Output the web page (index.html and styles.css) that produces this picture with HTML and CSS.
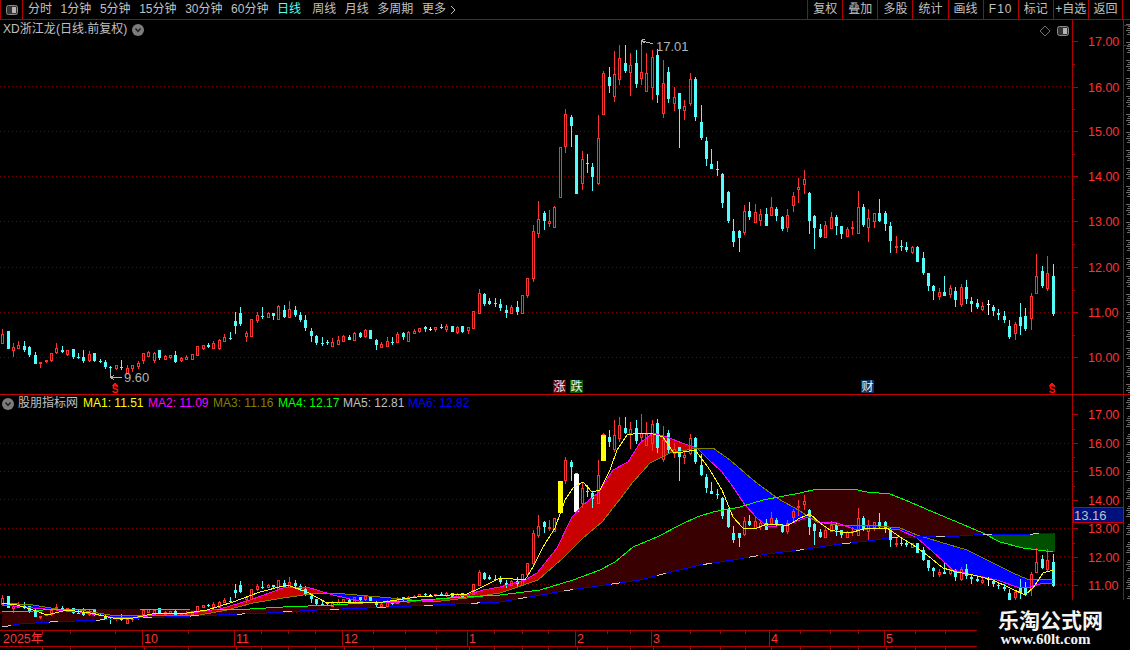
FILE: index.html
```html
<!DOCTYPE html>
<html lang="zh-CN">
<head>
  <meta charset="UTF-8" />
  <title>XD浙江龙 日线</title>
  <link rel="stylesheet" href="styles.css">
</head>
<body>
  <div class="toolbar">
    <div class="layoutBtn">
      <svg class="panelIcon" viewBox="0 0 12 10"><rect x="0.5" y="0.5" width="11" height="9" rx="2" class="panelIconFrame"/><rect x="6" y="2" width="4" height="6" class="panelIconFill"/></svg>
    </div>
    <div class="periods">
      <span>分时</span>
      <span>1分钟</span>
      <span>5分钟</span>
      <span>15分钟</span>
      <span>30分钟</span>
      <span>60分钟</span>
      <span class="active">日线</span>
      <span>周线</span>
      <span>月线</span>
      <span>多周期</span>
      <span class="more">更多<svg class="moreArrow" viewBox="0 0 6 10"><path d="M1 1 L5 5 L1 9"/></svg></span>
    </div>
    <div class="actions">
      <span>复权</span>
      <span>叠加</span>
      <span>多股</span>
      <span>统计</span>
      <span>画线</span>
      <span class="wide">F10</span>
      <span>标记</span>
      <span>+自选</span>
      <span class="last">返回</span>
    </div>
  </div>

  <section class="panel pricePanel">
    <svg id="priceChart" class="chart" viewBox="0 20 1130 374"></svg>
    <div class="panelTitle">
      <span class="titleText">XD浙江龙 (日线.前复权)</span>
      <svg class="roundBtn" viewBox="0 0 12 12"><circle cx="6" cy="6" r="6" class="roundBtnBg"/><path d="M3.5 4.5 L6 7.5 L8.5 4.5" class="roundBtnArrow"/></svg>
    </div>
    <div class="panelTools">
      <svg class="diamond" viewBox="0 0 12 12"><path d="M6 1 L11 6 L6 11 L1 6 Z"/></svg>
      <svg class="panelIcon" viewBox="0 0 12 10"><rect x="0.5" y="0.5" width="11" height="9" rx="2" class="panelIconFrame"/><rect x="6" y="2" width="4" height="6" class="panelIconFill"/></svg>
    </div>
  </section>

  <section class="panel indicatorPanel">
    <svg id="indicatorChart" class="chart" viewBox="0 395 1130 235"></svg>
    <div class="legend">
      <svg class="roundBtn" viewBox="0 0 12 12"><circle cx="6" cy="6" r="6" class="roundBtnBg"/><path d="M3.5 4.5 L6 7.5 L8.5 4.5" class="roundBtnArrow"/></svg>
      <span class="legendName">股朋指标网</span>
      <span class="legendItem ma1">MA1: 11.51</span>
      <span class="legendItem ma2">MA2: 11.09</span>
      <span class="legendItem ma3">MA3: 11.16</span>
      <span class="legendItem ma4">MA4: 12.17</span>
      <span class="legendItem ma5">MA5: 12.81</span>
      <span class="legendItem ma6">MA6: 12.82</span>
    </div>
  </section>

  <svg id="timeAxis" class="timeAxis" viewBox="0 630 1130 20"></svg>

  <div class="watermark">
    <div class="wmName">乐淘公式网</div>
    <div class="wmUrl">www.60lt.com</div>
  </div>

  <script src="chart.js"></script>
</body>
</html>
```

FILE: styles.css
```css
html, body {
  margin: 0;
  padding: 0;
  height: 100%;
  overflow: hidden;
  background: black;
  font-family: "Liberation Sans", "Noto Sans CJK SC", sans-serif;
  font-size: 12px;
  color: #c0c0c0;
}

.toolbar {
  display: flex;
  height: 20px;
  box-sizing: border-box;
  border-bottom: 1px solid #b00000;
  padding-right: 7px;
  line-height: 19px;
}

.layoutBtn {
  width: 23px;
  box-sizing: border-box;
  border-left: 1px solid #b00000;
  border-right: 1px solid #b00000;
  display: flex;
  align-items: center;
  justify-content: center;
}

.panelIcon {
  width: 12px;
  height: 10px;
}

.panelIconFrame {
  fill: #333;
  stroke: #8c8c8c;
}

.panelIconFill {
  fill: #b4b4b4;
}

.periods {
  display: flex;
  gap: 8.6px;
  margin-left: 5px;
}

.periods .active {
  color: #54fcfc;
  margin-right: 2.5px;
}

.more {
  display: flex;
  align-items: center;
  gap: 4px;
}

.moreArrow {
  width: 6px;
  height: 10px;
  fill: none;
  stroke: #c0c0c0;
}

.actions {
  display: flex;
  margin-left: auto;
}

.actions span {
  width: 35.1px;
  box-sizing: border-box;
  border-left: 1px solid #b00000;
  text-align: center;
}

.actions .wide {
  letter-spacing: 1px;
}

.actions .last {
  border-right: 1px solid #b00000;
}

.panel {
  position: relative;
}

.pricePanel {
  height: 375px;
  box-sizing: border-box;
  border-bottom: 1px solid #c80000;
}

.indicatorPanel {
  height: 235px;
}

.chart {
  display: block;
  width: 1130px;
}

.pricePanel .chart {
  height: 374px;
}

.indicatorPanel .chart {
  height: 235px;
}

.panelTitle {
  position: absolute;
  top: 2px;
  left: 3px;
  display: flex;
  align-items: center;
  gap: 5px;
  line-height: 15px;
}

.titleText {
  word-spacing: -3px;
}

.roundBtn {
  width: 12px;
  height: 12px;
}

.roundBtnBg {
  fill: #7c7c7c;
}

.roundBtnArrow {
  fill: none;
  stroke: #1c1c1c;
  stroke-width: 1.4;
}

.panelTools {
  position: absolute;
  top: 5px;
  left: 1039px;
  display: flex;
  align-items: center;
  gap: 6px;
}

.diamond {
  width: 12px;
  height: 12px;
  fill: none;
  stroke: #6c6c6c;
}

.legend {
  position: absolute;
  top: 1px;
  left: 2px;
  display: flex;
  align-items: center;
  line-height: 15px;
}

.legendName {
  width: 65px;
  margin-left: 4px;
}

.legendItem {
  width: 65px;
  white-space: nowrap;
}

.ma1 { color: #ffff00; }
.ma2 { color: #ff00ff; }
.ma3 { color: #808000; }
.ma4 { color: #00ff00; }
.ma5 { color: #c0c0c0; }
.ma6 { color: #0000ff; }

.timeAxis {
  display: block;
  width: 1130px;
  height: 20px;
}

.watermark {
  position: absolute;
  left: 977px;
  top: 600px;
  width: 153px;
  height: 50px;
  background: black;
  color: #f4f4f4;
  font-weight: bold;
  text-align: center;
}

.wmName {
  font-size: 21px;
  line-height: 24px;
  margin-top: 7px;
  padding-right: 6px;
  font-family: "Noto Sans CJK SC", sans-serif;
}

.wmUrl {
  font-size: 15px;
  line-height: 17px;
  padding-right: 16px;
  font-family: "Liberation Serif", serif;
}

/* chart pieces */
.chart line, .chart path, .chart rect, .chart polyline, .timeAxis line {
  shape-rendering: crispEdges;
}

.grid {
  stroke: #7c0000;
  stroke-dasharray: 1 3;
}

.axisLine {
  stroke: #b00000;
}

.axisText {
  fill: #ff3232;
  font-size: 12.5px;
}

.wickUp { stroke: #ff3232; }
.wickDown { stroke: #54fcfc; }
.wickFlat { stroke: #ffffff; }
.bodyUp { stroke: #ff3232; fill: black; }
.bodyUpOpen { stroke: #ff3232; fill: none; }
.bodyDown { fill: #54fcfc; }
.bodyFlat { fill: #ffffff; }

.line { fill: none; }
.lineMa1 { stroke: #ffff00; }
.lineMa2 { stroke: #ff00ff; }
.lineMa3 { stroke: #808000; }
.lineMa4 { stroke: #00ff00; }
.lineMa5 { stroke: #c8c8c8; stroke-dasharray: 9 38; }
.lineMa6 { stroke: #0000ff; }

.bandRed { stroke: #c80000; fill: none; }
.bandBlue { stroke: #0000ff; fill: none; }
.bandMaroon { stroke: #380000; fill: none; }
.bandGreen { stroke: #005000; fill: none; }

.barYellow { fill: #ffff00; }
.barWhite { fill: #ffffff; }

.note { fill: #b4b4b4; font-size: 13px; }
.noteLine { stroke: #b4b4b4; fill: none; }
.signal { fill: #ff1010; font-size: 10px; font-weight: bold; text-anchor: middle; }
.signalHead { fill: #ff1010; }
.tag { fill: #f0f0f0; font-size: 12px; text-anchor: middle; }
.tagRise { fill: #6c0000; }
.tagFall { fill: #006000; }
.tagCash { fill: #0c3464; }
.priceBox { fill: #00107c; stroke: #c80000; }
.priceBoxText { fill: #c0c0c0; font-size: 13px; }
.sideTick { stroke: #6c6c6c; }
```

FILE: chart.js
```js
// x, body top, body bottom, high, low, kind - all in main chart pixels
const candles = [
  [2,334,343,329,344,'r'],[8,331,349,331,349,'c'],[13,347,350,343,357,'r'],[18,345,348,341,348,'r'],
  [24,346,350,341,352,'c'],[29,347,355,346,357,'c'],[35,355,364,352,364,'c'],[40,362,363,362,368,'r'],
  [46,360,361,360,363,'r'],[51,353,360,353,362,'r'],[56,348,352,343,354,'r'],[62,350,352,346,353,'c'],
  [67,350,354,350,356,'r'],[73,349,357,349,359,'c'],[78,357,357,353,359,'c'],[83,357,361,350,363,'c'],
  [89,354,360,351,362,'r'],[94,353,361,353,362,'c'],[100,361,362,359,363,'c'],[105,362,367,360,369,'c'],
  [110,367,368,366,375,'c'],[116,365,368,365,370,'r'],[121,367,368,360,370,'c'],[127,368,373,365,374,'r'],
  [132,365,368,365,372,'r'],[138,363,366,361,369,'r'],[143,353,360,353,364,'r'],[148,352,356,351,357,'r'],
  [154,353,360,352,363,'r'],[159,350,358,350,360,'c'],[165,356,359,355,360,'r'],[170,355,357,355,359,'r'],
  [175,355,362,351,363,'c'],[181,358,360,357,362,'r'],[186,357,359,355,360,'r'],[192,354,359,354,359,'r'],
  [197,346,355,346,355,'r'],[203,345,348,345,350,'r'],[208,345,347,343,348,'c'],[213,343,348,341,349,'r'],
  [219,340,348,339,350,'r'],[224,337,341,334,341,'r'],[230,338,338,332,340,'c'],[235,321,326,312,334,'c'],
  [240,313,324,307,326,'c'],[246,333,336,331,342,'r'],[251,319,336,319,336,'r'],[257,315,320,312,323,'r'],
  [262,316,317,307,319,'c'],[268,313,317,312,317,'r'],[273,313,316,313,320,'c'],[278,306,319,305,320,'r'],
  [284,310,317,305,318,'c'],[289,309,317,301,317,'r'],[295,310,315,306,317,'c'],[300,315,320,312,322,'c'],
  [305,320,328,315,331,'c'],[311,331,336,328,342,'c'],[316,336,343,335,345,'c'],[322,343,343,337,346,'c'],
  [327,342,343,340,345,'c'],[332,342,346,338,346,'r'],[338,340,344,336,344,'r'],[343,336,341,335,341,'r'],
  [349,337,340,335,340,'c'],[354,333,340,332,340,'r'],[360,333,337,332,338,'c'],[365,330,336,329,338,'r'],
  [370,330,339,330,339,'c'],[376,340,345,339,350,'c'],[381,344,347,342,347,'r'],[387,341,346,337,346,'r'],
  [392,342,343,337,345,'c'],[397,334,342,332,343,'r'],[403,333,337,332,340,'c'],[408,332,341,331,341,'r'],
  [414,331,333,329,334,'r'],[419,328,331,328,333,'r'],[425,327,329,326,332,'c'],[430,329,329,327,331,'w'],
  [435,327,329,327,332,'r'],[441,327,328,324,329,'c'],[446,326,329,324,332,'r'],[452,326,332,326,332,'c'],
  [457,327,332,326,334,'r'],[462,326,332,326,333,'c'],[468,327,330,327,334,'r'],[473,311,328,311,328,'r'],
  [479,293,313,289,313,'r'],[484,294,304,293,306,'c'],[489,301,304,298,305,'c'],[495,303,304,298,307,'c'],
  [500,304,308,299,311,'c'],[506,310,313,305,318,'c'],[511,307,313,305,313,'r'],[517,307,312,301,315,'c'],
  [522,295,313,295,314,'r'],[527,278,295,278,298,'r'],[533,231,278,225,282,'r'],[538,219,233,201,238,'r'],
  [544,213,221,211,230,'c'],[549,221,223,210,227,'r'],[554,207,227,206,228,'r'],[560,147,197,147,197,'r'],
  [565,114,146,109,153,'r'],[571,117,126,115,147,'c'],[576,135,194,135,194,'c'],[582,159,183,151,190,'r'],
  [587,163,164,154,173,'c'],[592,167,177,163,191,'c'],[598,138,183,115,185,'r'],[603,73,114,71,114,'r'],
  [609,77,86,67,93,'c'],[614,74,96,51,102,'r'],[619,58,79,45,85,'r'],[625,63,71,45,73,'c'],
  [630,65,72,53,96,'r'],[636,63,84,50,88,'c'],[641,72,78,41,85,'r'],[646,73,91,53,91,'r'],
  [652,57,87,50,100,'r'],[657,55,95,49,103,'c'],[663,83,113,60,118,'r'],[668,72,99,67,103,'c'],
  [674,97,103,87,111,'r'],[679,93,109,93,148,'c'],[684,106,110,100,120,'r'],[690,79,103,73,106,'r'],
  [695,79,117,77,121,'c'],[701,122,138,105,140,'c'],[706,141,159,137,166,'c'],[711,164,169,149,169,'c'],
  [717,169,170,161,176,'c'],[722,174,203,173,208,'c'],[728,192,221,191,223,'c'],[733,231,242,219,247,'c'],
  [739,231,238,230,252,'c'],[744,211,232,205,235,'r'],[749,211,217,202,220,'c'],[755,212,222,204,222,'r'],
  [760,214,220,209,226,'r'],[766,214,226,208,226,'c'],[771,207,215,197,216,'r'],[776,209,216,207,221,'c'],
  [782,217,229,216,231,'c'],[787,215,227,209,232,'r'],[793,196,205,192,212,'r'],[798,187,189,178,203,'r'],
  [804,179,184,170,194,'r'],[809,193,221,192,234,'c'],[814,216,228,215,249,'c'],[820,229,237,224,238,'c'],
  [825,225,237,221,237,'r'],[831,217,228,212,228,'r'],[836,217,226,215,235,'c'],[841,226,234,226,239,'c'],
  [847,229,236,227,237,'r'],[852,227,228,221,235,'r'],[858,207,233,191,233,'r'],[863,207,225,204,227,'c'],
  [868,218,227,209,242,'r'],[874,213,221,213,228,'r'],[879,213,221,199,222,'c'],[885,213,224,211,231,'c'],
  [890,226,241,222,253,'c'],[896,246,247,236,253,'r'],[901,246,247,240,251,'c'],[906,247,250,242,252,'c'],
  [912,247,252,246,254,'r'],[917,247,262,246,262,'c'],[923,258,273,252,275,'c'],[928,273,286,273,291,'c'],
  [933,286,291,285,300,'c'],[939,292,296,288,300,'r'],[944,292,296,276,296,'c'],[950,288,294,285,298,'r'],
  [955,291,300,287,307,'c'],[961,287,304,284,307,'r'],[966,287,299,280,304,'c'],[971,301,304,297,312,'c'],
  [977,303,307,299,309,'c'],[982,306,309,302,311,'r'],[988,304,305,300,315,'w'],[993,307,311,305,316,'c'],
  [998,313,315,309,320,'c'],[1004,316,320,311,323,'c'],[1009,326,337,320,339,'c'],[1015,324,333,322,340,'r'],
  [1020,317,326,303,335,'c'],[1025,316,329,308,331,'c'],[1031,296,318,293,330,'r'],[1036,276,293,254,293,'r'],
  [1042,271,286,266,288,'c'],[1047,273,288,256,291,'r'],[1053,276,314,264,316,'c']
];

const ma1 = [[2,603],[17,605],[33,610],[47,615],[67,610],[90,613],[113,618],[133,618],[157,613],[187,613],[207,610],[233,602],[260,592],[287,585],[307,592],[327,603],[353,602],[383,602],[417,597],[467,594],[480,588],[500,578],[525,580],[533,567],[543,547],[555,528],[565,500],[573,488],[583,482],[592,492],[600,490],[610,470],[617,450],[627,435],[640,433],[653,434],[663,437],[673,452],[683,452],[695,450],[708,467],[722,490],[733,517],[743,528],[757,528],[767,524],[777,524],[787,526],[800,518],[810,514],[820,523],[830,530],[840,532],[853,532],[867,528],[887,528],[900,537],[913,545],[927,555],[943,568],[957,572],[973,575],[993,580],[1010,588],[1025,595],[1033,588],[1043,573],[1053,570]];
const ma2 = [[2,605],[33,608],[57,610],[80,612],[110,617],[140,618],[160,613],[190,613],[220,609],[250,600],[283,588],[307,587],[333,595],[363,602],[400,602],[433,600],[467,595],[483,590],[500,587],[525,580],[537,573],[557,548],[572,517],[583,505],[598,493],[613,470],[628,462],[640,443],[653,433],[667,437],[682,443],[697,448],[707,458],[722,472],[733,487],[745,505],[757,518],[768,527],[787,525],[800,520],[807,517],[820,522],[837,523],[857,530],[880,528],[900,530],[917,538],[933,552],[953,570],[973,575],[997,580],[1017,587],[1030,587],[1043,583],[1053,583]];
const ma3 = [[2,603],[33,605],[57,609],[80,610],[110,615],[133,615],[167,615],[200,615],[227,610],[253,603],[283,598],[317,593],[333,593],[380,597],[433,602],[467,598],[500,593],[538,580],[563,558],[583,538],[602,522],[617,503],[633,482],[650,463],[670,453],[687,450],[697,448],[713,448],[730,460],[753,480],[777,498],[800,511],[817,522],[837,525],[867,525],[900,528],[917,535],[940,542],[967,550],[987,560],[1013,573],[1027,579],[1053,579]];
const ma4 = [[2,612],[33,611],[43,610],[97,609],[140,609],[190,610],[217,610],[250,609],[283,607],[333,605],[363,603],[407,601],[450,598],[500,595],[540,590],[573,580],[600,570],[615,562],[633,547],[657,537],[680,525],[697,517],[713,512],[740,507],[763,500],[800,493],[817,489],[853,489],[867,492],[890,494],[910,502],[933,512],[957,522],[983,533],[1000,542],[1023,548],[1053,552]];
const ma6 = [[2,627],[20,624],[50,622],[100,620],[140,618],[217,615],[267,613],[317,610],[367,608],[433,605],[500,602],[570,590],[640,580],[667,573],[700,565],[733,560],[767,554],[800,550],[833,545],[867,541],[890,538],[920,537],[960,536],[987,534],[1033,534],[1053,533]];

const mainGrid = [86.5, 131.5, 176.5, 221.5, 267.5, 312.5, 357.5];
const mainTicks = [[41,'17.00'],[87,'16.00'],[131,'15.00'],[176,'14.00'],[221,'13.00'],[267,'12.00'],[312,'11.00'],[357,'10.00']];
const lowGrid = [443.5, 471.5, 499.5, 528.5, 556.5, 584.5, 612.5];
const lowTicks = [[414,'17.00'],[443,'16.00'],[471,'15.00'],[500,'14.00'],[528,'13.00'],[557,'12.00'],[585,'11.00']];
const months = [[142,'10'],[234,'11'],[342,'12'],[467,'1'],[575,'2'],[651,'3'],[769,'4'],[884,'5']];
const minorDays = [42,70,115,188,261,288,315,373,405,436,494,522,548,607,630,690,720,745,800,830,858,915,945];

const svgNs = 'http://www.w3.org/2000/svg';

function add(parent, tag, attrs, text) {
  const el = document.createElementNS(svgNs, tag);
  for (const key in attrs) el.setAttribute(key, attrs[key]);
  if (text) el.textContent = text;
  parent.appendChild(el);
  return el;
}

function hline(svg, y, x1, x2, cls) {
  add(svg, 'line', { x1: x1, x2: x2, y1: y, y2: y, class: cls });
}

function vline(svg, x, y1, y2, cls) {
  add(svg, 'line', { x1: x, x2: x, y1: y1, y2: y2, class: cls });
}

function drawCandles(svg, mapY, bodyClass) {
  candles.forEach(c => {
    const x = c[0];
    const top = mapY(c[1]);
    const bot = mapY(c[2]);
    const high = mapY(c[3]);
    const low = mapY(c[4]);
    const wick = c[5] === 'r' ? 'wickUp' : c[5] === 'c' ? 'wickDown' : 'wickFlat';
    if (high < top) vline(svg, x + 0.5, high, top, wick);
    if (low > bot) vline(svg, x + 0.5, bot, low, wick);
    if (c[5] === 'r') {
      add(svg, 'rect', { x: x - 0.5, y: top + 0.5, width: 2, height: Math.max(bot - top, 1), class: bodyClass });
    } else {
      const cls = c[5] === 'c' ? 'bodyDown' : 'bodyFlat';
      add(svg, 'rect', { x: x - 1, y: top, width: 3, height: Math.max(bot - top, 1), class: cls });
    }
  });
}

function drawAxis(svg, ticks, top, bottom) {
  vline(svg, 1072.5, top, bottom, 'axisLine');
  vline(svg, 1123.5, top, bottom, 'axisLine');
  ticks.forEach((t, i) => {
    hline(svg, t[0] + 0.5, 1072, 1078, 'axisLine');
    if (i < ticks.length - 1) {
      const mid = Math.round((t[0] + ticks[i + 1][0]) / 2) + 0.5;
      hline(svg, mid, 1072, 1075, 'axisLine');
    }
    add(svg, 'text', { x: 1088, y: t[0] + 5, class: 'axisText' }, t[1]);
  });
}

function drawSideStrip(svg, top, bottom) {
  for (let y = top; y < bottom; y += 2) {
    if ((y - top) % 18 < 12) hline(svg, y + 0.5, 1126 + (y % 3), 1130, 'sideTick');
  }
}

function at(points, x) {
  if (x <= points[0][0]) return points[0][1];
  for (let i = 1; i < points.length; i++) {
    if (x <= points[i][0]) {
      const a = points[i - 1];
      const b = points[i];
      return a[1] + (b[1] - a[1]) * (x - a[0]) / (b[0] - a[0]);
    }
  }
  return points[points.length - 1][1];
}

// fills one pixel column at a time, colour depends on which line is on top
function drawBand(svg, upper, lower, startX, clsAbove, clsBelow) {
  let above = '';
  let below = '';
  for (let x = startX; x <= 1054; x++) {
    const a = Math.round(at(upper, x));
    const b = Math.round(at(lower, x));
    const seg = 'M' + (x + 0.5) + ' ' + Math.min(a, b) + 'V' + Math.max(a, b);
    if (a <= b) above += seg;
    else below += seg;
  }
  add(svg, 'path', { d: above, class: clsAbove });
  add(svg, 'path', { d: below, class: clsBelow });
}

function drawLine(svg, points, cls) {
  add(svg, 'polyline', { points: points.map(p => p.join(',')).join(' '), class: 'line ' + cls });
}

function drawSignal(svg, x) {
  add(svg, 'path', { d: 'M' + (x - 3) + ' 385.5H' + (x + 3) + 'L' + x + ' 382Z', class: 'signalHead' });
  add(svg, 'text', { x: x, y: 392.5, class: 'signal' }, 'S');
}

function drawTag(svg, x, label, cls) {
  add(svg, 'rect', { x: x, y: 380, width: 13, height: 13, class: cls });
  add(svg, 'text', { x: x + 6.5, y: 391, class: 'tag' }, label);
}

function drawPriceChart() {
  const svg = document.getElementById('priceChart');
  mainGrid.forEach(y => hline(svg, y, 0, 1072, 'grid'));
  drawCandles(svg, y => y, 'bodyUp');
  drawAxis(svg, mainTicks, 20, 394);
  drawSideStrip(svg, 24, 394);
  hline(svg, 25.5, 1123, 1130, 'axisLine');
  hline(svg, 45.5, 1123, 1130, 'axisLine');

  add(svg, 'path', { d: 'M110 372V377.5H122M110 377.5L114 375.5M110 377.5L114 379.5', class: 'noteLine' });
  add(svg, 'text', { x: 124, y: 382, class: 'note' }, '9.60');
  add(svg, 'path', { d: 'M641 45V40.5L653 44M641 40.5L645 39M641 40.5L645 43', class: 'noteLine' });
  add(svg, 'text', { x: 656, y: 51, class: 'note' }, '17.01');

  drawSignal(svg, 115);
  drawSignal(svg, 1052);
  drawTag(svg, 553, '涨', 'tagRise');
  drawTag(svg, 570, '跌', 'tagFall');
  drawTag(svg, 861, '财', 'tagCash');
}

function drawIndicatorChart() {
  const svg = document.getElementById('indicatorChart');
  lowGrid.forEach(y => hline(svg, y, 0, 1072, 'grid'));

  drawBand(svg, ma4, ma6, 2, 'bandMaroon', 'bandGreen');
  drawBand(svg, ma2, ma3, 2, 'bandRed', 'bandBlue');

  drawCandles(svg, y => Math.round(414 + (y - 41) * 0.6283), 'bodyUpOpen');

  add(svg, 'rect', { x: 558, y: 481, width: 5, height: 32, class: 'barYellow' });
  add(svg, 'rect', { x: 574, y: 474, width: 5, height: 38, class: 'barWhite' });
  add(svg, 'rect', { x: 601, y: 435, width: 5, height: 26, class: 'barYellow' });

  drawLine(svg, ma3, 'lineMa3');
  drawLine(svg, ma2, 'lineMa2');
  drawLine(svg, ma4, 'lineMa4');
  drawLine(svg, ma6, 'lineMa6');
  drawLine(svg, ma6, 'lineMa5');
  drawLine(svg, ma1, 'lineMa1');

  drawAxis(svg, lowTicks, 395, 600);
  drawSideStrip(svg, 398, 600);
  add(svg, 'rect', { x: 1073.5, y: 507.5, width: 50, height: 15, class: 'priceBox' });
  add(svg, 'text', { x: 1074, y: 520, class: 'priceBoxText' }, '13.16');
}

function drawTimeAxis() {
  const svg = document.getElementById('timeAxis');
  hline(svg, 630.5, 0, 977, 'axisLine');
  hline(svg, 646.5, 0, 977, 'axisLine');
  add(svg, 'text', { x: 3, y: 643, class: 'axisText' }, '2025年');
  months.forEach(m => {
    vline(svg, m[0] + 0.5, 631, 646, 'axisLine');
    vline(svg, m[0] + 2.5, 647, 650, 'axisLine');
    add(svg, 'text', { x: m[0] + 2, y: 643, class: 'axisText' }, m[1]);
  });
  minorDays.forEach(x => {
    vline(svg, x + 0.5, 631, 634, 'axisLine');
    vline(svg, x + 0.5, 647, 650, 'axisLine');
  });
}

drawPriceChart();
drawIndicatorChart();
drawTimeAxis();
```
